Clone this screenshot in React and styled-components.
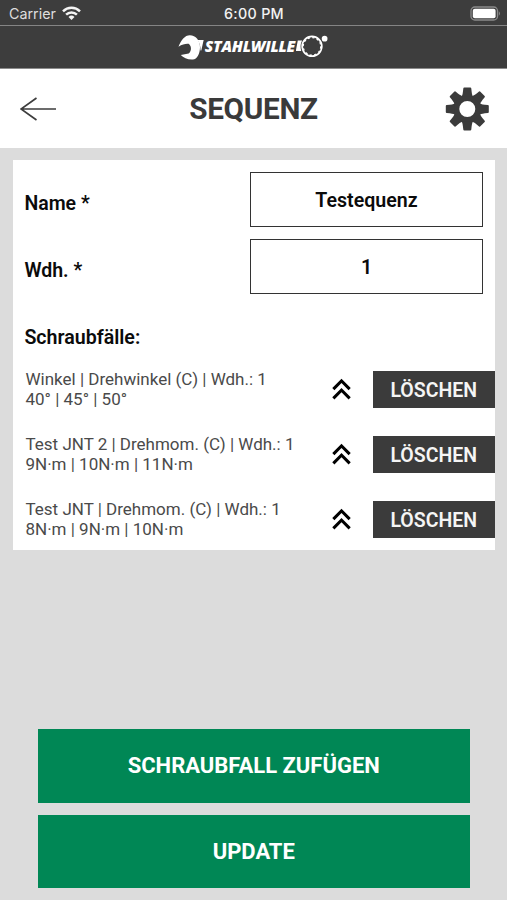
import React from 'react';
import styled, { createGlobalStyle } from 'styled-components';

const GlobalStyle = createGlobalStyle`
  *, *::before, *::after { box-sizing: border-box; }
  body { margin: 0; background: #dcdcdc; font-family: Roboto, sans-serif; }
`;

const Screen = styled.div`
  width: 507px;
  height: 900px;
  display: flex;
  flex-direction: column;
  background: #dcdcdc;
  overflow: hidden;
`;

const StatusBar = styled.div`
  height: 26px;
  display: grid;
  grid-template-columns: 1fr auto 1fr;
  align-items: center;
  padding: 2px 6px 0 9px;
  background: #3d3d3d;
  border-bottom: 1px solid #858585;
  color: #f2f2f2;
  font: 400 14.3px/20px Inter, sans-serif;
`;

const Carrier = styled.div`
  display: flex;
  align-items: center;
  gap: 6px;
  color: #dedede;
`;

const Clock = styled.div`
  margin-right: 2px;
  font-weight: 500;
  letter-spacing: 0.3px;
`;

const BatterySlot = styled.div`
  display: flex;
  justify-content: flex-end;
`;

const BrandBar = styled.div`
  height: 43px;
  display: flex;
  align-items: flex-start;
  justify-content: center;
  padding-top: 8px;
  background: #3d3d3d;
  border-bottom: 1px solid #8b8b8b;
`;

const Brand = styled.div`
  display: flex;
  align-items: flex-start;
  width: 151px;
  color: #fff;
`;

const BrandName = styled.span`
  width: 93px;
  margin-left: 1px;
  font: italic 800 15.6px/24px "Open Sans", sans-serif;
  letter-spacing: -0.18px;
  white-space: nowrap;
`;

const Header = styled.header`
  height: 79px;
  display: grid;
  grid-template-columns: 60px 1fr 60px;
  align-items: center;
  padding: 0 10px;
  background: #fff;
`;

const IconButton = styled.button`
  display: flex;
  align-items: center;
  justify-content: center;
  padding: 0;
  border: 0;
  background: none;
  color: #3b3b3b;
`;

const BackButton = styled(IconButton)`
  justify-content: flex-start;
  padding-left: 10px;
`;

const Title = styled.h1`
  margin: 0;
  text-align: center;
  color: #3a3a3a;
  font-size: 29.7px;
  line-height: 40px;
  font-weight: 700;
  letter-spacing: -0.3px;
`;

const Card = styled.main`
  width: 482px;
  height: 390px;
  margin: 12px 0 0 13px;
  padding-top: 12px;
  background: #fff;
`;

const Field = styled.label`
  display: flex;
  justify-content: space-between;
  height: 55px;
  margin-bottom: 12px;
  padding: 0 12px 0 11.4px;
`;

const Label = styled.span`
  padding-top: 20px;
  color: #0b0b0b;
  font-size: 19.5px;
  line-height: 24px;
  font-weight: 600;
`;

const Input = styled.input`
  width: 233px;
  height: 55px;
  padding: 2px 0 0;
  border: 1.4px solid #333;
  border-radius: 0;
  background: #fff;
  color: #0b0b0b;
  text-align: center;
  font: 600 19.6px/24px Roboto, sans-serif;
  outline: none;
`;

const Subheading = styled.h2`
  margin: 0;
  padding: 20px 11.4px 0;
  height: 65px;
  color: #0b0b0b;
  font-size: 19.6px;
  line-height: 24px;
  font-weight: 600;
`;

const CaseRow = styled.div`
  display: flex;
  align-items: center;
  height: 37px;
  margin-bottom: 27.8px;
  padding-left: 12.5px;
`;

const CaseText = styled.div`
  flex: 1;
  padding-top: 1px;
  color: #4a4a4a;
  font-size: 17px;
  line-height: 19.8px;
  white-space: pre-line;
`;

const DeleteButton = styled.button`
  width: 122.5px;
  height: 37px;
  margin-left: 12.5px;
  padding: 2px 0 0;
  border: 0;
  background: #3b3b3b;
  color: #f5f5f5;
  font: 600 19.5px/35px Roboto, sans-serif;
`;

const Actions = styled.footer`
  display: flex;
  flex-direction: column;
  gap: 12px;
  margin: auto 37px 12px 37.5px;
`;

const ActionButton = styled.button`
  height: 73.5px;
  padding: 0;
  border: 0;
  background: #008755;
  color: #fff;
  font: 700 22px/73px Roboto, sans-serif;
`;

const WifiIcon = () => (
  <svg width="19" height="15" viewBox="0 0 19 15" fill="none" stroke="#f4f4f4" strokeWidth="2.5">
    <path d="M1 5.3a12.2 12.2 0 0 1 17 0" />
    <path d="M4.1 8.7a7.7 7.7 0 0 1 10.8 0" />
    <path d="M9.5 14 6.5 11a4.3 4.3 0 0 1 6 0z" fill="#f4f4f4" stroke="none" />
  </svg>
);

const BatteryIcon = () => (
  <svg width="31" height="15" viewBox="0 0 31 15">
    <rect x="1" y="1" width="26.5" height="13" rx="3.8" fill="none" stroke="#8a8a8a" strokeWidth="1.3" />
    <rect x="2.8" y="2.8" width="22.8" height="9.4" rx="2" fill="#fff" />
    <path d="M28.8 5.3c1.5.8 1.5 3.6 0 4.4z" fill="#8a8a8a" />
  </svg>
);

const WrenchIcon = () => (
  <svg width="26" height="27" viewBox="0 0 26 27" fill="#fff">
    <path d="M.5 12.700C3 6 7 1 12 1c6 0 10.500 5.500 10.300 12.500-.2 6.500-2.800 11.800-7.300 12.200-5 .3-9.500-1.500-12.200-4.500l8-1.500c1.700-1.300 2.500-3.700 2.300-5.700-.2-1.800-1.200-3.500-2.300-4.200-3-.3-6.300.4-10.300 2.900z" />
    <path d="M19.500 6H26l-2.400 10.500h-.8C22.800 12 22 8.500 19.500 6z" />
  </svg>
);

const RingIcon = () => (
  <svg width="33" height="27" viewBox="0 0 33 27" fill="none">
    <path d="M1.800 6.500h4.400c-1.700 3-2 6.700-.9 10.500H-.2z" fill="#fff" />
    <circle cx="16.200" cy="12.300" r="10" stroke="#fff" strokeWidth="1.700" />
    <circle cx="16.200" cy="12.300" r="8.900" stroke="#fff" strokeWidth="1.300" strokeDasharray="2.330 2.330" />
    <circle cx="29" cy="4.600" r="2.900" fill="#fff" />
  </svg>
);

const BackIcon = () => (
  <svg width="36" height="24" viewBox="0 0 36 24" fill="none" stroke="#3d3d3d" strokeWidth="1.7">
    <path d="M.8 12H36M16.500 1 1 12l15.500 11" />
  </svg>
);

const TEETH = [0, 45, 90, 135, 180, 225, 270, 315];

const GearIcon = () => (
  <svg width="44" height="44" viewBox="-22.300 -22 44 44" fill="#3b3b3b">
    <circle r="11" fill="none" stroke="#3b3b3b" strokeWidth="6" />
    {TEETH.map((angle) => (
      <path
        key={angle}
        transform={`rotate(${angle})`}
        d="M-5.600-12.500C-4.700-14-4.500-16-4-20.600Q-3.900-21.500-3-21.500H3Q3.900-21.500 4-20.600C4.500-16 4.700-14 5.600-12.500z"
      />
    ))}
  </svg>
);

const MoveUpIcon = () => (
  <svg width="37" height="37" viewBox="0 0 24 24" fill="#000">
    <path d="M7.410 18.410 6 17l6-6 6 6-1.410 1.410L12 13.830zM7.410 12.410 6 11l6-6 6 6-1.410 1.410L12 7.830z" />
  </svg>
);

const CASES = [
  'Winkel | Drehwinkel (C) | Wdh.: 1\n40° | 45° | 50°',
  'Test JNT 2 | Drehmom. (C) | Wdh.: 1\n9N·m | 10N·m | 11N·m',
  'Test JNT | Drehmom. (C) | Wdh.: 1\n8N·m | 9N·m | 10N·m',
];

export default function App() {
  return (
    <Screen>
      <GlobalStyle />
      <StatusBar>
        <Carrier>
          Carrier
          <WifiIcon />
        </Carrier>
        <Clock>6:00 PM</Clock>
        <BatterySlot>
          <BatteryIcon />
        </BatterySlot>
      </StatusBar>
      <BrandBar>
        <Brand>
          <WrenchIcon />
          <BrandName>STAHLWILLE</BrandName>
          <RingIcon />
        </Brand>
      </BrandBar>
      <Header>
        <BackButton aria-label="Zurück">
          <BackIcon />
        </BackButton>
        <Title>SEQUENZ</Title>
        <IconButton aria-label="Einstellungen">
          <GearIcon />
        </IconButton>
      </Header>
      <Card>
        <Field>
          <Label>Name *</Label>
          <Input defaultValue="Testequenz" />
        </Field>
        <Field>
          <Label>Wdh. *</Label>
          <Input defaultValue="1" />
        </Field>
        <Subheading>Schraubfälle:</Subheading>
        {CASES.map((text) => (
          <CaseRow key={text}>
            <CaseText>{text}</CaseText>
            <IconButton aria-label="Nach oben">
              <MoveUpIcon />
            </IconButton>
            <DeleteButton>LÖSCHEN</DeleteButton>
          </CaseRow>
        ))}
      </Card>
      <Actions>
        <ActionButton>SCHRAUBFALL ZUFÜGEN</ActionButton>
        <ActionButton>UPDATE</ActionButton>
      </Actions>
    </Screen>
  );
}
